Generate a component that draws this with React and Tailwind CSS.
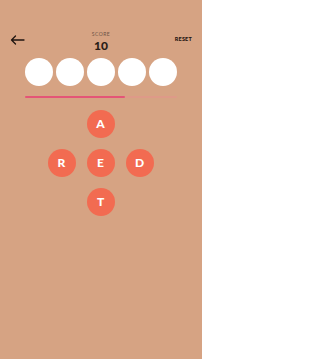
import React from 'react';

const Letter = ({ ch }) => (
  <div className="w-[28px] h-[28px] rounded-full bg-[#F26B51] flex items-center justify-center text-white text-[12px] font-black leading-none">
    {ch}
  </div>
);

export default function App() {
  const slots = [0, 1, 2, 3, 4];
  const progress = 66;

  return (
    <div className="w-[202px] h-[359px] bg-[#D6A383] font-['Lato',sans-serif] text-[#2a1d17]">
      <div className="grid grid-cols-[1fr_auto_1fr] items-start px-[10px] pt-[31px]">
        <div className="flex items-center mt-[4px]">
          <svg width="15" height="10" viewBox="0 0 15 10" fill="none" stroke="#1f1410" strokeWidth="1.3" strokeLinecap="round" strokeLinejoin="round">
            <path d="M14 5H1.5M5.5 1L1.5 5L5.5 9" />
          </svg>
        </div>
        <div className="flex flex-col items-center">
          <div className="text-[5px] leading-[6px] tracking-[0.5px] text-[#6b5346]">SCORE</div>
          <div className="text-[12px] leading-[12px] font-black mt-[3px]">10</div>
        </div>
        <div className="flex justify-end mt-[5px]">
          <span className="text-[5.5px] leading-[7px] font-black tracking-[0.2px] text-[#1f1410]">RESET</span>
        </div>
      </div>

      <div className="flex justify-center gap-[3px] mt-[6px]">
        {slots.map((s) => (
          <div key={s} className="w-[28px] h-[28px] rounded-full bg-white" />
        ))}
      </div>

      <div className="mx-[25px] mt-[10px] h-[2px] bg-[#DE9A88] rounded-full">
        <div className="h-full bg-[#E45577] rounded-full" style={{ width: `${progress}%` }} />
      </div>

      <div className="grid grid-cols-[28px_28px_28px] gap-[11px] justify-center mt-[12px] ml-[-1px]">
        <div />
        <Letter ch="A" />
        <div />
        <Letter ch="R" />
        <Letter ch="E" />
        <Letter ch="D" />
        <div />
        <Letter ch="T" />
        <div />
      </div>
    </div>
  );
}
